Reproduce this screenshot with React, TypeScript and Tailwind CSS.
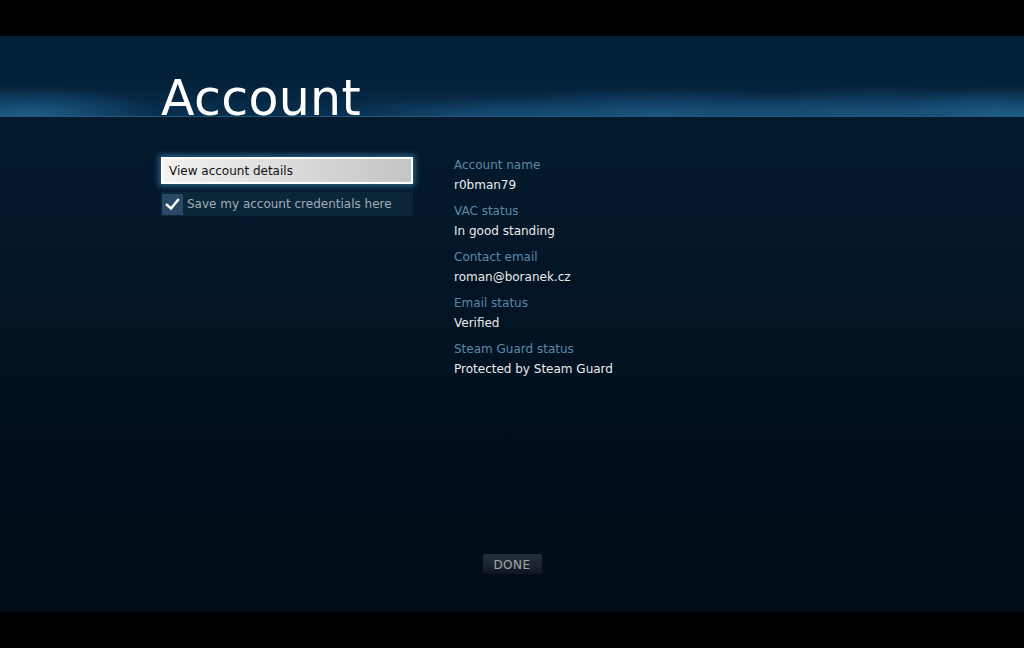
import React from "react";

const items: [string, string][] = [
  ["Account name", "r0bman79"],
  ["VAC status", "In good standing"],
  ["Contact email", "roman@boranek.cz"],
  ["Email status", "Verified"],
  ["Steam Guard status", "Protected by Steam Guard"],
];

export default function App() {
  return (
    <div className="w-[1024px] h-[648px] bg-black flex flex-col overflow-hidden font-['DejaVu_Sans',sans-serif]">
      <div className="h-[36px] bg-black shrink-0" />
      <div className="h-[576px] shrink-0 flex flex-col bg-[linear-gradient(180deg,#041d31_0%,#03182a_30%,#020f1b_70%,#020c16_100%)]">
        {/* header */}
        <div className="h-[81px] shrink-0 flex items-end pl-[161px] border-b border-[#1d5477] bg-[radial-gradient(ellipse_130px_30px_at_30px_100%,rgba(38,110,160,0.75),transparent),radial-gradient(ellipse_220px_28px_at_660px_100%,rgba(38,110,160,0.65),transparent),radial-gradient(ellipse_170px_30px_at_880px_100%,rgba(38,110,160,0.6),transparent),radial-gradient(ellipse_120px_30px_at_1010px_100%,rgba(38,110,160,0.7),transparent),radial-gradient(ellipse_140px_20px_at_470px_100%,rgba(38,110,160,0.4),transparent),linear-gradient(180deg,#03203a_0%,#04213a_60%,#08304f_100%)]">
          <h1 className="text-[49px] leading-[34px] text-white font-['DejaVu_Sans',sans-serif] tracking-[0.3px]">
            Account
          </h1>
        </div>
        {/* content */}
        <div className="flex pl-[161px] pt-[40px]">
          <div className="w-[252px] flex flex-col">
            <div className="h-[27px] border-2 border-white bg-[linear-gradient(90deg,#f2f2f2_0%,#d6d6d6_60%,#c4c4c4_100%)] shadow-[0_0_6px_2px_rgba(80,160,220,0.55)] flex items-center pl-[6px] text-[12px] text-[#111]">
              View account details
            </div>
            <div className="mt-[8px] h-[24px] bg-[#0c2639] flex items-center">
              <div className="ml-[1px] w-[21px] h-[21px] bg-[#284866] flex items-center justify-center">
                <svg width="15" height="13" viewBox="0 0 15 13">
                  <path d="M2 7 L6 10.5 L13 2" stroke="white" strokeWidth="2.6" fill="none" strokeLinecap="square" />
                </svg>
              </div>
              <span className="ml-[4px] text-[12px] text-[#9fadba]">Save my account credentials here</span>
            </div>
          </div>
          <div className="ml-[41px] flex flex-col gap-[6px] -mt-[2px]">
            {items.map(([label, value]) => (
              <div key={label} className="flex flex-col">
                <div className="h-[20px] leading-[20px] text-[12px] text-[#5d88a8]">{label}</div>
                <div className="h-[20px] leading-[20px] text-[12px] text-[#ebebeb]">{value}</div>
              </div>
            ))}
          </div>
        </div>
        <div className="flex-1" />
        <div className="flex justify-center pb-[38px]">
          <div className="w-[59px] h-[20px] rounded-[2px] bg-[linear-gradient(180deg,#25303a_0%,#1a242e_60%,#0e161e_100%)] flex items-center justify-center text-[12px] text-[#a3a7ab] tracking-[0.5px] pt-[2px]">
            DONE
          </div>
        </div>
      </div>
      <div className="h-[36px] bg-black shrink-0" />
    </div>
  );
}
